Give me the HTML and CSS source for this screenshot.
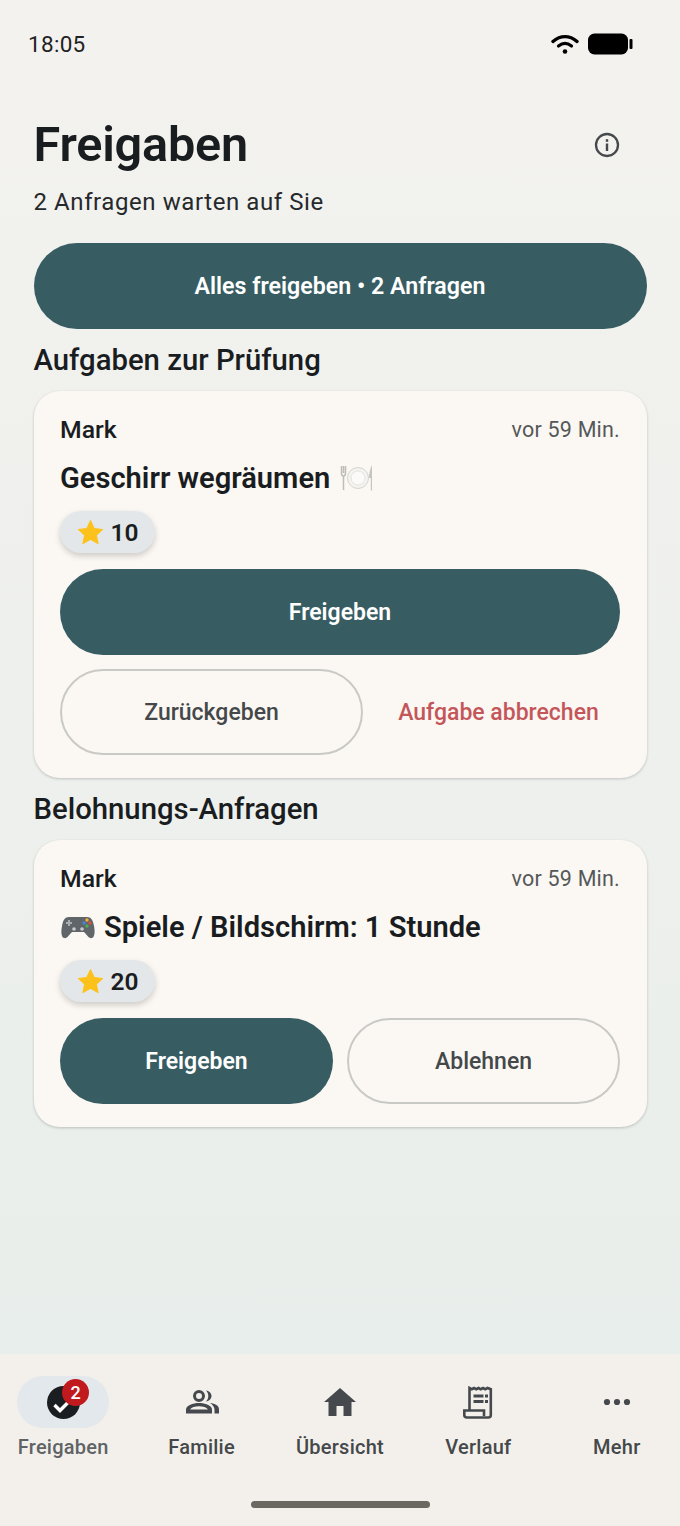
FILE: index.html
```html
<!DOCTYPE html>
<html lang="de">
<head>
<meta charset="utf-8">
<title>Freigaben</title>
<link rel="stylesheet" href="styles.css">
</head>
<body>
<div class="app">
  <div class="status">
    <span class="time">18:05</span>
    <span class="status-icons">
      <svg class="wifi" viewBox="0 0 28 20" width="28" height="20"><path d="M2 7.500C9.500 1 18.500 1 26 7.500" fill="none" stroke="#000" stroke-width="3.400" stroke-linecap="round"/><path d="M7.500 12C11.500 8.800 16.500 8.800 20.500 12" fill="none" stroke="#000" stroke-width="3.200" stroke-linecap="round"/><circle cx="14" cy="17.500" r="2.300" fill="#000"/></svg>
      <svg class="battery" viewBox="0 0 46 22" width="46" height="22"><rect x="1" y="0.500" width="40" height="21" rx="6.500" fill="#000"/><rect x="42.500" y="6" width="3" height="10" rx="1" fill="#000"/></svg>
    </span>
  </div>
  <main class="content">
    <header class="head">
      <h1>Freigaben</h1>
      <svg class="info" viewBox="0 0 26 26" width="26" height="26"><circle cx="13" cy="13" r="11" fill="none" stroke="#45494b" stroke-width="2.300"/><rect x="11.800" y="11.500" width="2.400" height="7.500" fill="#45494b"/><rect x="11.800" y="7.200" width="2.400" height="2.600" fill="#45494b"/></svg>
    </header>
    <p class="sub">2 Anfragen warten auf Sie</p>
    <button class="btn primary all">Alles freigeben • 2 Anfragen</button>
    <h2>Aufgaben zur Prüfung</h2>
    <section class="card">
      <div class="row"><span class="name">Mark</span><span class="when">vor 59 Min.</span></div>
      <div class="title gap-wide"><span>Geschirr wegräumen</span><svg class="emoji plate" viewBox="0 0 34 30" width="34" height="30"><circle cx="18" cy="15" r="10.500" fill="#f4f3ef" stroke="#d5d5d0" stroke-width="1"/><circle cx="18" cy="15" r="7" fill="#fbfaf8" stroke="#e4e4e0" stroke-width="1"/><path d="M1.500 3v7c0 2 1 3 2 3.300V27M3.500 3v7M5.500 3v7c0 2-1 3-2 3.300" fill="none" stroke="#bdbdb6" stroke-width="1.500"/><path d="M32 2c-2 4-3 8-3 13h1.800v12.500H32z" fill="#c6c6bf"/></svg></div>
      <span class="chip"><svg class="star" viewBox="0 0 24 24" width="27" height="27"><path d="M12 1.500l3.200 6.900 7.500.9-5.500 5.100 1.500 7.400L12 18.100l-6.700 3.700 1.500-7.400L1.300 9.300l7.500-.9z" fill="#fcc21b" stroke="#fcc21b" stroke-linejoin="round"/></svg>10</span>
      <button class="btn primary wide">Freigeben</button>
      <div class="actions first">
        <button class="btn outline">Zurückgeben</button>
        <button class="btn danger">Aufgabe abbrechen</button>
      </div>
    </section>
    <h2>Belohnungs-Anfragen</h2>
    <section class="card">
      <div class="row"><span class="name">Mark</span><span class="when">vor 59 Min.</span></div>
      <div class="title"><svg class="emoji pad" viewBox="0 0 36 30" width="36" height="30"><path d="M9 5h18c4 0 6 3 7 9 1 5 1 11-2 12-3 1-5-3-8-6H12c-3 3-5 7-8 6-3-1-3-7-2-12 1-6 3-9 7-9z" fill="#5f6569"/><path d="M6 11h6M9 8v6" stroke="#a9adb0" stroke-width="2"/><circle cx="14" cy="17" r="1.800" fill="#c9cccd"/><circle cx="22" cy="17" r="1.800" fill="#c9cccd"/><circle cx="27" cy="8" r="1.700" fill="#f2b233"/><circle cx="30" cy="11" r="1.700" fill="#d9503f"/><circle cx="24" cy="11" r="1.700" fill="#4a86d8"/><circle cx="27" cy="14" r="1.700" fill="#4caf50"/></svg><span>Spiele / Bildschirm: 1 Stunde</span></div>
      <span class="chip"><svg class="star" viewBox="0 0 24 24" width="27" height="27"><path d="M12 1.500l3.200 6.900 7.500.9-5.500 5.100 1.500 7.400L12 18.100l-6.700 3.700 1.500-7.400L1.300 9.300l7.500-.9z" fill="#fcc21b" stroke="#fcc21b" stroke-linejoin="round"/></svg>20</span>
      <div class="actions split">
        <button class="btn primary">Freigeben</button>
        <button class="btn outline">Ablehnen</button>
      </div>
    </section>
  </main>
  <nav class="nav">
    <div class="tabs">
      <div class="tab active">
        <span class="ico pill">
          <svg viewBox="0 0 33 33" width="33" height="33"><circle cx="16.500" cy="16.500" r="16.500" fill="#1b1e20"/><path d="M7.500 19l5.500 5.500 8-8" fill="none" stroke="#fff" stroke-width="3.400"/></svg>
          <span class="badge">2</span>
        </span>
        <span class="lbl">Freigaben</span>
      </div>
      <div class="tab">
        <span class="ico"><svg viewBox="0 0 34 24" width="34" height="24"><circle cx="14" cy="6" r="4.500" fill="none" stroke="#45494d" stroke-width="3"/><path d="M21 .5c3.500.5 5.500 3 5.500 5.500s-2 5-5.500 5.500c1.500-1.500 2.300-3.500 2.300-5.500S22.500 2 21 .5z" fill="#45494d"/><path d="M1 23.500v-4c0-4 7-6.500 13-6.500s13 2.500 13 6.500v4zM5 19.500h18c-1.500-2-5-3.200-9-3.200s-7.500 1.200-9 3.200z" fill="#45494d" fill-rule="evenodd"/><path d="M25 13c5 .5 9 2.500 9 6.500v4h-4.500v-4c0-2.500-2-5-4.500-6.500z" fill="#45494d"/></svg></span>
        <span class="lbl">Familie</span>
      </div>
      <div class="tab">
        <span class="ico"><svg viewBox="0 0 32 28" width="32" height="28"><path d="M16 0L0 14h4.500v14h8V18h7v10h8V14H32z" fill="#45494d"/></svg></span>
        <span class="lbl">Übersicht</span>
      </div>
      <div class="tab">
        <span class="ico"><svg viewBox="0 0 30 33" width="30" height="33"><path d="M6.500 24V2l2.300 1.200L11 2l2.200 1.200L15.500 2l2.200 1.200L20 2l2.200 1.200L24.500 2l3.300 1.200V29c0 1.500-1 2.500-2.500 2.500H4C2.500 31.500 1.300 30.500 1.300 29v-4.500H21V30" fill="none" stroke="#45494d" stroke-width="2.600"/><path d="M10.500 8.500h10v3h-10zM10.500 14h10v3h-10zM22 8.500h3v3h-3zM22 14h3v3h-3z" fill="#45494d"/></svg></span>
        <span class="lbl">Verlauf</span>
      </div>
      <div class="tab">
        <span class="ico"><svg viewBox="0 0 28 8" width="28" height="8"><circle cx="4" cy="4" r="3.100" fill="#45494d"/><circle cx="14" cy="4" r="3.100" fill="#45494d"/><circle cx="24" cy="4" r="3.100" fill="#45494d"/></svg></span>
        <span class="lbl">Mehr</span>
      </div>
    </div>
    <div class="home"></div>
  </nav>
</div>
</body>
</html>
```
FILE: styles.css
```css
* { box-sizing: border-box; margin: 0; padding: 0; }
html, body { width: 680px; height: 1526px; overflow: hidden; }
body { font-family: Roboto, "Noto Sans", sans-serif; color: #1a1d1f; }
.app {
  width: 680px; height: 1526px; display: flex; flex-direction: column; overflow: hidden;
  background: linear-gradient(180deg, #f3f2ee 0%, #eef0ed 50%, #e8eeeb 88%);
}
.status { height: 116px; padding: 29px 47px 0 28px; display: flex; justify-content: space-between; align-items: flex-start; flex: none; }
.time { font-size: 22.5px; line-height: 30px; letter-spacing: .3px; color: #222; }
.status-icons { display: flex; align-items: center; gap: 8px; height: 30px; }
.content { flex: 1; padding: 0 33.5px; display: flex; flex-direction: column; min-height: 0; }
.head { display: flex; justify-content: space-between; align-items: center; height: 56px; padding-right: 26.5px; margin-top: 1px; }
h1 { font-size: 48.600px; font-weight: 600; line-height: 56px; letter-spacing: -.2px; color: #1a1d1f; }
.sub { font-size: 24px; line-height: 32px; letter-spacing: .58px; margin-top: 13px; color: #26292b; }
.btn { font-family: Roboto, sans-serif; font-size: 23px; font-weight: 600; height: 86px; border-radius: 43px; border: 0; display: flex; align-items: center; justify-content: center; background: transparent; }
.primary { background: #375d63; color: #fff; }
.all { width: 100%; margin-top: 25px; flex: none; font-size: 23.200px; }
h2 { font-size: 29.300px; font-weight: 500; line-height: 34px; margin: 14px 0 14px; color: #1a1d1f; }
.card { background: #fbf8f3; border-radius: 26px; padding: 22px 26.5px 23px; display: flex; flex-direction: column; align-items: flex-start; box-shadow: 0 1px 3px rgba(0,0,0,.2); flex: none; }
.row { width: 100%; display: flex; justify-content: space-between; align-items: center; height: 33px; }
.name { font-size: 24.800px; font-weight: 500; color: #1a1d1f; }
.when { font-size: 21.500px; color: #55585a; letter-spacing: .2px; }
.title { font-size: 29.100px; font-weight: 600; line-height: 40px; margin-top: 12px; display: flex; align-items: center; gap: 8px; white-space: pre; color: #1a1d1f; }
.gap-wide { gap: 10px; }
.emoji { flex: none; }
.chip { height: 42px; width: 95px; margin-top: 13px; border-radius: 21px; background: #e4e7e9; display: flex; align-items: center; justify-content: center; gap: 7px; font-size: 24.500px; font-weight: 600; box-shadow: 0 3px 6px rgba(0,0,0,.18); }
.wide { width: 100%; margin-top: 16px; flex: none; }
.actions { width: 100%; display: grid; gap: 14px; margin-top: 14px; }
.first { grid-template-columns: 303px 1fr; }
.split { grid-template-columns: 1fr 1fr; margin-top: 16px; }
.outline { border: 2px solid #c9c9c5; color: #45484a; background: #fbf8f3; font-weight: 500; }
.danger { color: #c4565a; font-weight: 500; }
.nav { height: 172px; flex: none; background: #f3f0eb; display: flex; flex-direction: column; align-items: center; }
.tabs { width: 692px; flex: none; padding-top: 22px; display: grid; grid-template-columns: repeat(5, 1fr); height: 147px; }
.tab { display: flex; flex-direction: column; align-items: center; }
.ico { height: 52px; width: 92px; display: flex; align-items: center; justify-content: center; position: relative; }
.pill { background: #e3e8ec; border-radius: 26px; }
.badge { position: absolute; left: 45px; top: 3px; width: 27px; height: 27px; border-radius: 50%; background: #c01a1f; color: #fff; font-size: 18px; font-weight: 500; display: flex; align-items: center; justify-content: center; }
.lbl { font-size: 20px; line-height: 26px; margin-top: 6px; font-weight: 500; letter-spacing: .25px; color: #45484a; }
.active .lbl { color: #606366; }
.home { width: 179px; height: 7px; border-radius: 4px; background: #6b6862; }
```
